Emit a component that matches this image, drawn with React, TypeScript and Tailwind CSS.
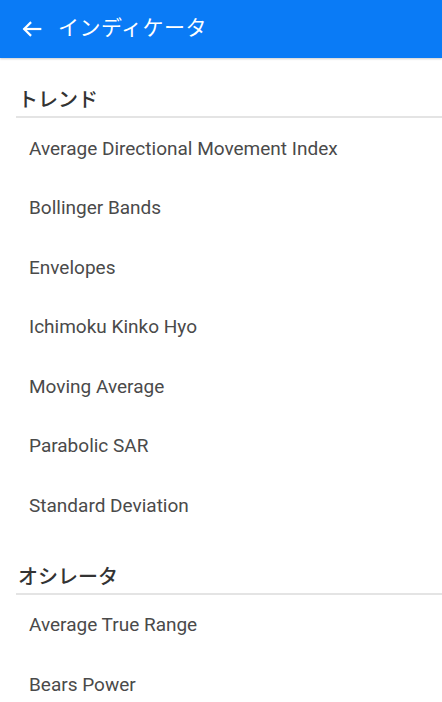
import React from "react";

const trend = [
  "Average Directional Movement Index",
  "Bollinger Bands",
  "Envelopes",
  "Ichimoku Kinko Hyo",
  "Moving Average",
  "Parabolic SAR",
  "Standard Deviation",
];
const osc = ["Average True Range", "Bears Power"];

const font = { fontFamily: 'Roboto, "Noto Sans CJK JP", sans-serif' };

function Section({ title, items }: { title: string; items: string[] }) {
  return (
    <div>
      <div className="h-[58px] flex items-end pl-[18px] pb-[4px]">
        <span className="text-[20px] leading-[24px] font-medium text-[#333]">{title}</span>
      </div>
      <div className="ml-[16px] h-[2px] bg-[#e4e4e4]" />
      {items.map((t) => (
        <div key={t} className="h-[59.5px] flex items-center pl-[29px] pt-[2px] text-[19px] text-[#4a4a4a]">
          {t}
        </div>
      ))}
    </div>
  );
}

export default function App() {
  return (
    <div className="w-[442px] h-[702px] overflow-hidden bg-white" style={font}>
      <div className="h-[58px] bg-[#0a7bf6] flex items-center shadow-[0_1px_2px_rgba(0,0,0,0.2)] relative z-10">
        <svg className="ml-[21px] w-[22px] h-[22px]" viewBox="0 0 24 24" fill="none" stroke="white" strokeWidth="2.4" strokeLinecap="square">
          <path d="M21 12H4" />
          <path d="M11 4.5L3.5 12l7.5 7.5" strokeLinecap="butt" />
        </svg>
        <span className="ml-[15px] text-[21px] text-white tracking-[0.5px]">インディケータ</span>
      </div>
      <Section title="トレンド" items={trend} />
      <Section title="オシレータ" items={osc} />
    </div>
  );
}
